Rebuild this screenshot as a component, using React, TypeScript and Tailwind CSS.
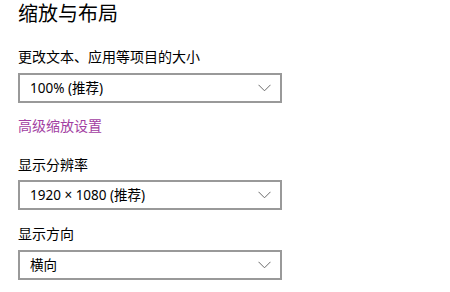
import React from "react";

const font = { fontFamily: '"Noto Sans", "Noto Sans CJK SC", sans-serif' };

function Chevron() {
  return (
    <svg width="13" height="8" viewBox="0 0 13 8" className="shrink-0">
      <path d="M0.5 0.8 L6.5 6.8 L12.5 0.8" fill="none" stroke="#6b6b6b" strokeWidth="1" />
    </svg>
  );
}

function Select({ value }: { value: string }) {
  return (
    <div className="flex h-[30px] w-[264px] items-center justify-between border-2 border-[#999999] bg-white pl-[10px] pr-[9px]">
      <span className="text-[13.5px] leading-5 text-black">{value}</span>
      <Chevron />
    </div>
  );
}

export default function App() {
  return (
    <div className="h-[292px] w-[450px] bg-white pl-[18px] text-black" style={font}>
      <div className="text-[20px] leading-[28px]">缩放与布局</div>
      <div className="mt-[19px] text-[14px] leading-5">更改文本、应用等项目的大小</div>
      <div className="mt-[6px]">
        <Select value="100% (推荐)" />
      </div>
      <div className="mt-[13px] text-[14px] leading-5 text-[#a23ea2]">高级缩放设置</div>
      <div className="mt-[19px] text-[14px] leading-5">显示分辨率</div>
      <div className="mt-[5px]">
        <Select value="1920 × 1080 (推荐)" />
      </div>
      <div className="mt-[14px] text-[14px] leading-5">显示方向</div>
      <div className="mt-[6px]">
        <Select value="横向" />
      </div>
    </div>
  );
}
